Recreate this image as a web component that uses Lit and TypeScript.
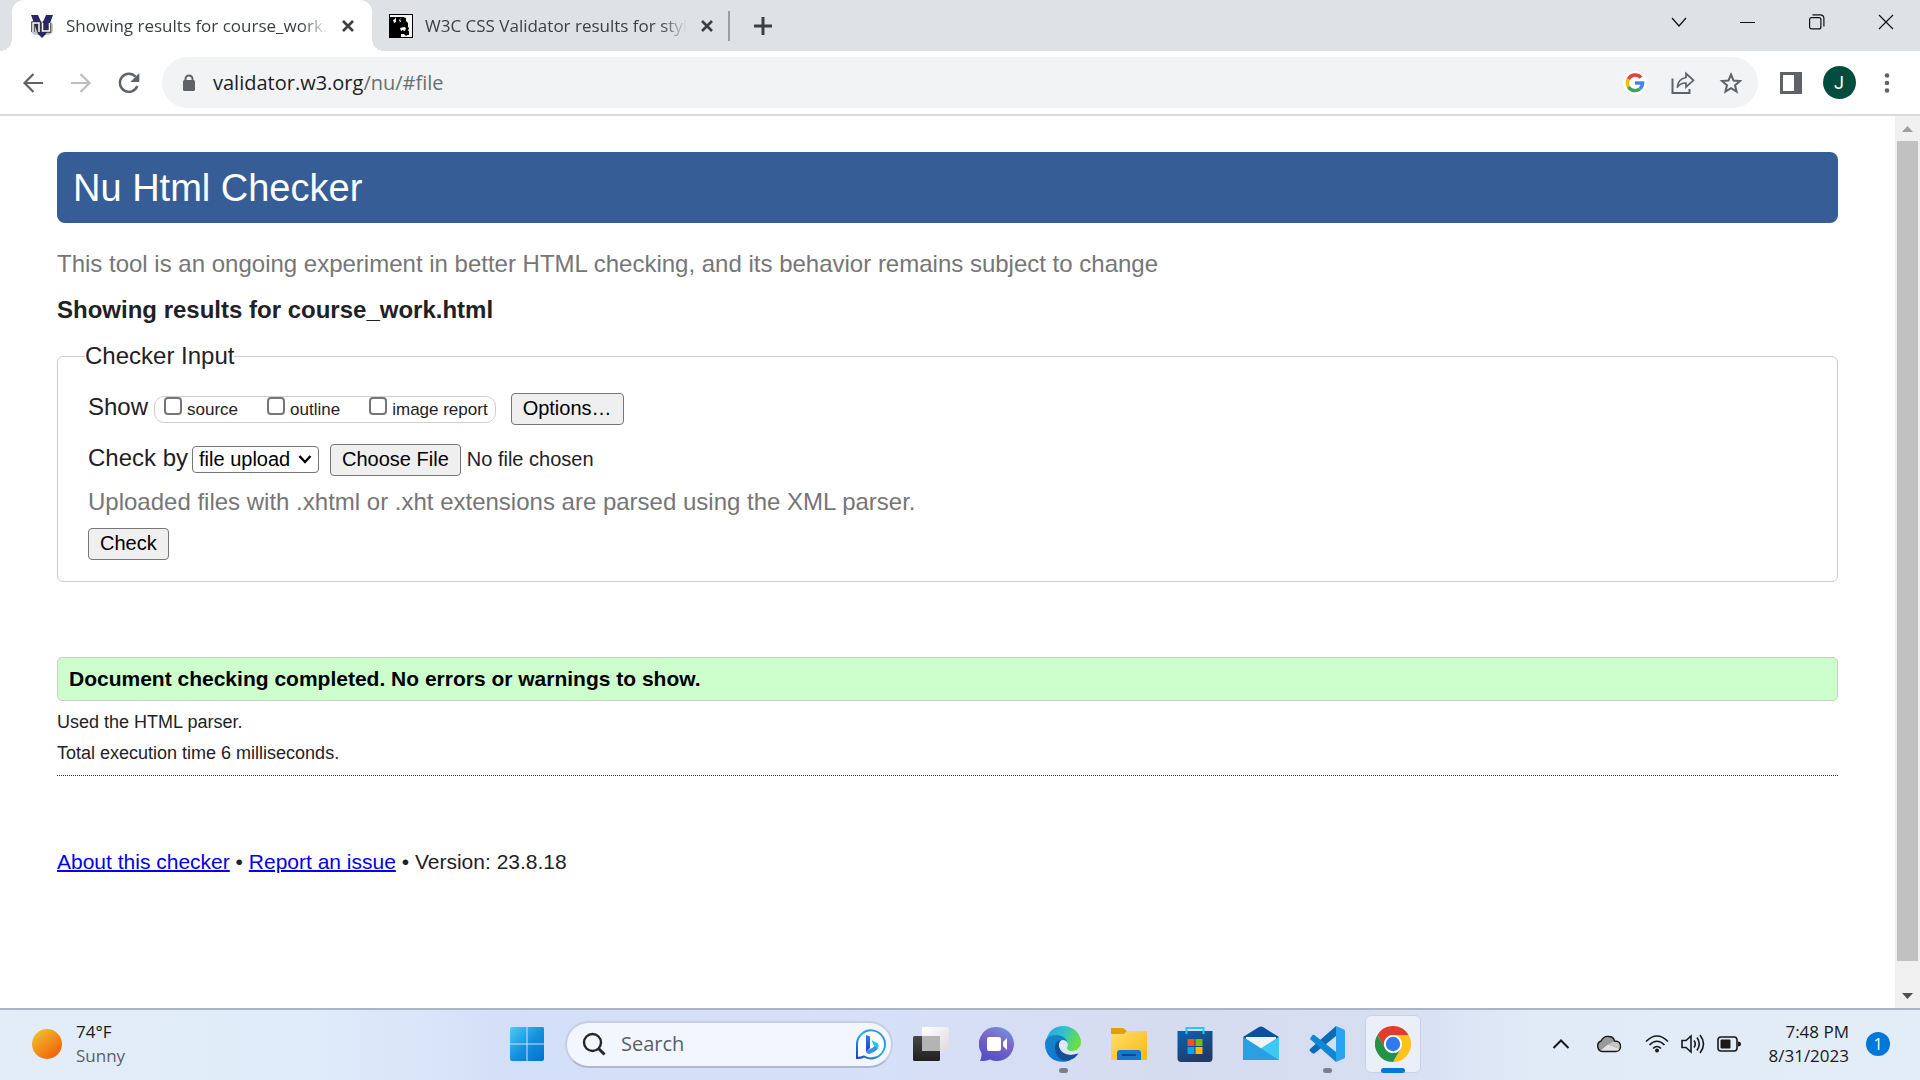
import { LitElement, html, svg, css } from "lit";
import { customElement } from "lit/decorators.js";

const stroke = (d: string, w = 2, color = "currentColor") =>
  svg`<path d=${d} fill="none" stroke=${color} stroke-width=${w}></path>`;

const icon = (size: number, body: unknown) =>
  html`<svg width=${size} height=${size} viewBox="0 0 ${size} ${size}" aria-hidden="true">${body}</svg>`;

@customElement("browser-chrome")
class BrowserChrome extends LitElement {
  static styles = css`
    :host { display: block; font-family: "Open Sans", "Noto Sans", sans-serif; color: #3c4043; }
    button { border: 0; padding: 0; margin: 0; background: none; color: inherit; font: inherit;
      display: flex; align-items: center; justify-content: center; flex: none; }
    svg { display: block; flex: none; }
    .strip { display: flex; height: 51px; background: #dee1e6; padding-left: 12px; }
    .tab { position: relative; display: flex; align-items: center; width: 359px; height: 51px;
      box-sizing: border-box; padding: 0 12px 0 18px; border-radius: 12px 12px 0 0; }
    .tab.active { background: #fff; width: 360px; }
    .tab:not(.active) { padding-left: 17px; }
    .tab.active::before, .tab.active::after { content: ""; position: absolute; bottom: 0; width: 12px; height: 12px; }
    .tab.active::before { left: -12px; background: radial-gradient(circle at 0 0, transparent 12px, #fff 12px); }
    .tab.active::after { right: -12px; background: radial-gradient(circle at 100% 0, transparent 12px, #fff 12px); }
    .tab-title { flex: 1; margin: 0 8px 0 12px; overflow: hidden; white-space: nowrap; font-size: 17px; line-height: 24px;
      -webkit-mask-image: linear-gradient(90deg, #000 90%, transparent); mask-image: linear-gradient(90deg, #000 90%, transparent); }
    .tab-close { width: 24px; height: 24px; }
    .divider { width: 2px; height: 30px; margin: 11px 12px 0 -3px; background: #9a9da1; }
    .new-tab { width: 42px; height: 51px; padding-bottom: 0; }
    .window-controls { display: flex; margin-left: auto; color: #111; }
    .window-controls button { width: 69px; height: 44px; }
    .toolbar { display: flex; align-items: center; height: 63px; box-sizing: border-box; padding: 0 9px; background: #fff;
      color: #5f6368; }
    .tool { width: 48px; height: 48px; }
    .tool.dim { color: #bcbec1; }
    .address { display: flex; align-items: center; flex: 1; height: 51px; margin: 0 9px; padding: 0 3px 0 18px;
      border-radius: 26px; background: #f1f3f4; }
    .url { flex: 1; margin-left: 15px; font-size: 20px; line-height: 28px; color: #6a6e73; white-space: nowrap; }
    .host { color: #202124; }
    .avatar { display: flex; align-items: center; justify-content: center; width: 33px; height: 33px; border-radius: 50%;
      background: #004d40; color: #fff; font: 18px/24px Roboto, sans-serif; }
    .rule { height: 2px; background: #dadada; }
  `;

  private closeIcon = icon(14, stroke("M2 2 L12 12 M12 2 L2 12", 2.6, "#3c4043"));

  render() {
    return html`
      <div class="strip">
        <div class="tab active">
          ${icon(24, svg`
            <rect x="1" y="7" width="22" height="14" rx="5" fill="#c4c4c4"></rect>
            <path d="M1 1h7l4 9 4-9h7l-7 19-4 4-4-4z" fill="#29266b"></path>
            <path d="M3 18V9h6v9M12.500 9v8h7V9" fill="none" stroke="#333" stroke-width="3.400"></path>
            <path d="M3 18V9h6v9M12.500 9v8h7V9" fill="none" stroke="#fff" stroke-width="1.500"></path>`)}
          <span class="tab-title">Showing results for course_work.html</span>
          <button class="tab-close" aria-label="Close tab">${this.closeIcon}</button>
        </div>
        <div class="tab">
          ${icon(24, svg`
            <rect width="24" height="24" fill="#000"></rect>
            <path d="M1 1H23V23H12V20H15L17 22L20 20V17L16 18L12 17L11 14L15 13L16 10L14 8H11L10 6L12 4H15V3H6L7 5V8L5 9L4 6L6 5V3H1z" fill="#f6f4ee"></path>
            <path d="M11 5L14 3L17 4V7L19 9V13L20 14L19 17L20 21H16L15 19L12 18L13 16L16 17L17 14L14 12L15 9L12 8z" fill="#000"></path>`)}
          <span class="tab-title">W3C CSS Validator results for style.css</span>
          <button class="tab-close" aria-label="Close tab">${this.closeIcon}</button>
        </div>
        <div class="divider"></div>
        <button class="new-tab" aria-label="New tab">${icon(20, stroke("M10 1V19M1 10H19", 3, "#3c4043"))}</button>
        <div class="window-controls">
          <button aria-label="Search tabs">${icon(16, stroke("M1 4L8 12L15 4", 1.2))}</button>
          <button aria-label="Minimize">${icon(16, stroke("M0 8.5H15", 1))}</button>
          <button aria-label="Restore">${icon(16, svg`
            <rect x=".6" y="3.6" width="11.3" height="11.3" rx="2" fill="none" stroke="currentColor" stroke-width="1.2"></rect>
            ${stroke("M3.5 .8H11Q14.9 .8 14.9 4.5V12.5", 1.2)}`)}</button>
          <button aria-label="Close">${icon(16, stroke("M1 1L15 15M15 1L1 15", 1.2))}</button>
        </div>
      </div>
      <div class="toolbar">
        <button class="tool" aria-label="Back">${icon(24, stroke("M22 12H4M12.5 3L3.5 12L12.5 21", 2.2))}</button>
        <button class="tool dim" aria-label="Forward">${icon(24, stroke("M2 12H20M11.5 3L20.5 12L11.5 21", 2.2))}</button>
        <button class="tool" aria-label="Reload">${icon(24, svg`
          ${stroke("M20.3 15A9 9 0 1 1 18.6 5.8", 2.4)}
          <path d="M22.3 2V11H13.3z" fill="currentColor"></path>`)}</button>
        <div class="address">
          ${icon(18, svg`
            <rect x="3" y="6" width="12" height="11" rx="1.5" fill="#5f6368"></rect>
            ${stroke("M5.5 7V5a3.5 3.5 0 0 1 7 0V7", 2, "#5f6368")}`)}
          <span class="url"><span class="host">validator.w3.org</span>/nu/#file</span>
          <button class="tool" aria-label="Google">${icon(24, svg`
            <circle cx="12" cy="12" r="12" fill="#fff"></circle>
            <g fill="none" stroke-width="3.4">
              <path d="M18 6.6A7.6 7.6 0 0 0 5.4 8.2" stroke="#ea4335"></path>
              <path d="M5.4 8.2A7.6 7.6 0 0 0 5.4 15.8" stroke="#fbbc05"></path>
              <path d="M5.4 15.8A7.6 7.6 0 0 0 17 17.7" stroke="#34a853"></path>
              <path d="M17 17.7A7.6 7.6 0 0 0 19.6 12H12" stroke="#4285f4"></path>
            </g>`)}</button>
          <button class="tool" aria-label="Share">${icon(24, svg`
            ${stroke("M1.5 7.5V22H18.5V18", 2)}
            <path d="M15 2.5L22.5 9.3L15 16V12C10 12 8 13.500 6.200 16.500C6.800 11 9.500 7.300 15 6.500z" fill="none" stroke="currentColor" stroke-width="1.7"></path>`)}</button>
          <button class="tool" aria-label="Bookmark">${icon(24, svg`
            <path d="M12 3.500L14.500 9.500L21 10L16 14.300L17.600 20.700L12 17.200L6.400 20.700L8 14.300L3 10L9.500 9.500z" fill="none" stroke="currentColor" stroke-width="2"></path>`)}</button>
        </div>
        <button class="tool" aria-label="Side panel">${icon(22, svg`
          <rect width="22" height="22" fill="currentColor"></rect><rect x="3" y="3" width="11" height="16" fill="#fff"></rect>`)}</button>
        <button class="tool" aria-label="Profile"><span class="avatar">J</span></button>
        <button class="tool" aria-label="Menu">${icon(22, svg`
          <circle cx="11" cy="3.500" r="2.300" fill="currentColor"></circle>
          <circle cx="11" cy="11" r="2.300" fill="currentColor"></circle>
          <circle cx="11" cy="18.500" r="2.300" fill="currentColor"></circle>`)}</button>
      </div>
      <div class="rule"></div>
    `;
  }
}

@customElement("checker-page")
class CheckerPage extends LitElement {
  static styles = css`
    :host { display: flex; flex: 1; background: #fff; color: #1f2126; font-family: "Liberation Sans", Arial, sans-serif; }
    .content { flex: 1; min-width: 0; padding: 36px 57px 0; font-size: 24px; line-height: 28px; }
    h1 { margin: 0 0 27px; padding: 14px 16px 13px; border-radius: 8px; background: #365d95; color: #fff;
      font-size: 38px; font-weight: 400; line-height: 44px; }
    p, h2 { margin: 0 0 18px; }
    h2 { font-size: 24px; line-height: 28px; }
    .muted { color: #767676; }
    fieldset { margin: 0 0 75px; padding: 23px 30px 21px; border: 1px solid #ccc; border-radius: 6px; min-width: 0; }
    legend { margin-left: -3px; padding: 0; }
    .row { display: flex; align-items: baseline; height: 32px; margin-bottom: 19px; }
    .row.by { margin-bottom: 12px; }
    .row label { white-space: nowrap; }
    .hint { margin-bottom: 12px; }
    .group { display: flex; gap: 29px; align-items: baseline; margin: 0 15px 0 6px; padding: 0 7px 0 9px; border: 1px solid #d0d0d0;
      border-radius: 10px; font-size: 17px; line-height: 25px; }
    .group label { display: flex; align-items: baseline; gap: 5px; }
    .group input { appearance: none; width: 18px; height: 18px; margin: 0; border: 2px solid #767676; border-radius: 4px;
      background: #fff; align-self: flex-start; }
    button, ::file-selector-button { box-sizing: border-box; height: 32px; padding: 0 11px 2px; border: 1px solid #767676;
      border-radius: 4px; background: #efefef; color: #000; font: 20px/28px "Liberation Sans", Arial, sans-serif; }
    .picker { display: flex; align-items: baseline; margin: 0 11px 0 4px; border: 1px solid #767676; border-radius: 4px;
      padding: 0 6px; height: 25px; }
    select { appearance: none; border: 0; padding: 0; margin: 0 7px 0 0; background: none; color: #000;
      font: 20px/25px "Liberation Sans", Arial, sans-serif; }
    .file { font: 20px/30px "Liberation Sans", Arial, sans-serif; color: #1f2126; }
    ::file-selector-button { margin: 0 6px 0 0; }
    .success { margin: 0 0 9px; padding: 8px 11px; border: 1px solid #ccc; border-radius: 5px; background: #cfc; color: #000;
      font-size: 21px; font-weight: 700; line-height: 26px; }
    .detail { margin: 0 0 7px; font-size: 18px; line-height: 24px; }
    hr { margin: 10px 0 72px; border: 0; border-top: 1px dotted #333; }
    .about { font-size: 21px; }
    a { color: #00e; text-decoration-thickness: 2px; }
    .scrollbar { display: flex; flex-direction: column; align-items: center; justify-content: space-between; width: 25px; background: #f0f0f0; }
    .thumb { flex: 1; width: 21px; background: #c1c1c1; }
    .arrow { display: block; }
    .arrow.down { margin-top: 22px; }
  `;

  render() {
    return html`
      <main class="content">
        <h1>Nu Html Checker</h1>
        <p class="muted">This tool is an ongoing experiment in better HTML checking, and its behavior remains subject to change</p>
        <h2>Showing results for course_work.html</h2>
        <fieldset>
          <legend>Checker Input</legend>
          <div class="row">
            <span>Show</span>
            <div class="group">
              ${["source", "outline", "image report"].map((t) => html`<label><input type="checkbox" />${t}</label>`)}
            </div>
            <button>Options…</button>
          </div>
          <div class="row by">
            <label for="method">Check by</label>
            <span class="picker">
              <select id="method"><option>file upload</option></select>
              ${icon(14, stroke("M1.500 4L7 10L12.500 4", 2.300, "#000"))}
            </span>
            <input class="file" type="file" aria-label="File to check" />
          </div>
          <p class="muted hint">Uploaded files with .xhtml or .xht extensions are parsed using the XML parser.</p>
          <button>Check</button>
        </fieldset>
        <p class="success">Document checking completed. No errors or warnings to show.</p>
        <p class="detail">Used the HTML parser.</p>
        <p class="detail">Total execution time 6 milliseconds.</p>
        <hr />
        <p class="about"><a href="#about">About this checker</a> • <a href="#issue">Report an issue</a> • Version: 23.8.18</p>
      </main>
      <div class="scrollbar" aria-hidden="true">
        <svg class="arrow" width="25" height="25" viewBox="0 0 25 25"><path d="M7 16L12.500 10L18 16z" fill="#a0a0a0"></path></svg>
        <div class="thumb"></div>
        <svg class="arrow down" width="25" height="25" viewBox="0 0 25 25"><path d="M7 10L12.500 16L18 10z" fill="#505050"></path></svg>
      </div>
    `;
  }
}

@customElement("task-bar")
class TaskBar extends LitElement {
  static styles = css`
    :host { display: grid; grid-template-columns: 1fr auto 1fr; align-items: center; height: 68px; padding-bottom: 2px;
      border-top: 2px solid #abb5c4;
      font-family: "Open Sans", "Noto Sans", sans-serif; font-size: 17px; line-height: 24px; color: #191919;
      background: linear-gradient(90deg, #e2edf8 0%, #e0ecf9 16%, #d3dff8 27%, #d6e0f8 46%, #d6dcf0 60%, #d6def2 72%, #e0ebf7 80%, #e2edf8 100%); }
    button { border: 0; padding: 0; margin: 0; background: none; color: inherit; font: inherit; }
    svg { display: block; flex: none; }
    .weather { display: flex; align-items: center; gap: 14px; margin-left: 32px; text-align: left; justify-self: start; }
    .condition { color: #5b5f66; }
    .sun { width: 30px; height: 30px; border-radius: 50%; background: linear-gradient(140deg, #efc02f 10%, #f26a0c 80%); }
    .apps { display: flex; align-items: center; }
    .app { position: relative; display: flex; align-items: center; justify-content: center; width: 56px; height: 58px; margin: 0 5px;
      box-sizing: border-box; border-radius: 6px; }
    .app.current { background: #ebeff9; border: 1px solid #c9d1e6; }
    .running { position: absolute; bottom: 0; width: 9px; height: 5px; border-radius: 3px; background: #7b7f89; }
    .current .running { width: 24px; background: #0078d7; bottom: -1px; }
    .search { display: flex; align-items: center; width: 328px; height: 47px; margin: 0 5px; box-sizing: border-box;
      padding: 0 4px 0 15px; border: 2px solid #c5cee2; border-bottom-color: #adb8cd; border-radius: 24px; background: #f2f6fe; }
    .search input { flex: 1; min-width: 0; border: 0; padding: 0; margin: 0 0 0 15px; background: none; outline: 0;
      font: 20px/28px "Open Sans", "Noto Sans", sans-serif; }
    .search input::placeholder { color: #5c5e63; opacity: 1; }
    .tray { display: flex; align-items: center; justify-self: end; margin-right: 30px; }
    .tray button { display: flex; align-items: center; justify-content: center; }
    .slot { width: 48px; height: 48px; }
    .status { display: flex; gap: 12px; margin: 0 27px 0 12px; }
    .clock { text-align: right; }
    .badge { width: 24px; height: 24px; margin-left: 17px; border-radius: 50%; background: #0078d7; color: #fff; font-size: 16px; }
  `;

  private apps = [
    { name: "Task view", art: svg`
        <defs><linearGradient id="tv" x2="0" y2="1"><stop stop-color="#484848"></stop><stop offset="1" stop-color="#202020"></stop></linearGradient>
        <linearGradient id="tw" x2="1" y2="1"><stop stop-color="#fff"></stop><stop offset="1" stop-color="#dcdcdc"></stop></linearGradient></defs>
        <rect x="0" y="10" width="27" height="25" rx="1.500" fill="url(#tv)"></rect>
        <rect x="9" y="1" width="27" height="24" rx="1.500" fill="url(#tw)"></rect>
        <path d="M9 10H27V25H10Q9 25 9 24z" fill="#b4b4b4"></path>` },
    { name: "Chat", art: svg`
        <defs><linearGradient id="ch" x1=".9" y1="0" x2=".4" y2="1"><stop stop-color="#6d9be8"></stop><stop offset=".45" stop-color="#7b68c4"></stop><stop offset="1" stop-color="#5350c8"></stop></linearGradient></defs>
        <path d="M18 1A17 17 0 1 1 11 33.500Q6 35.500 1 35Q3 31 2.500 27A17 17 0 0 1 18 1z" fill="url(#ch)"></path>
        <rect x="8" y="11" width="14" height="14" rx="2" fill="#fff"></rect>
        <path d="M24 16L28 12V24L24 20z" fill="#fff"></path>` },
    { name: "Edge", running: true, art: svg`
        <defs><linearGradient id="ea" x2="1" y2=".4"><stop stop-color="#2a9fe0"></stop><stop offset=".5" stop-color="#2fc2cf"></stop><stop offset="1" stop-color="#6ade45"></stop></linearGradient>
        <linearGradient id="eb" x2=".6" y2="1"><stop stop-color="#1a87c9"></stop><stop offset="1" stop-color="#0778d4"></stop></linearGradient></defs>
        <path d="M1 15C3 5 10 0 18 0C29 0 36 8 36 16C36 22 31 25 27 25C23 25 21 23 22.500 20.500C23 19 23 17 21 15z" fill="url(#ea)"></path>
        <path d="M0 18C0 12 5 9 11 9C18 9 22 13 22.500 17C20 13 15 14 14 19C13 25 17 33 25 34C16 39 0 34 0 18z" fill="url(#eb)"></path>
        <path d="M14 19C14 16 15.500 14.500 17 14C12 14 9.500 18 10 23C11 31 17 36 24 34.500C29 33 32.500 29.500 33.500 27C27 30 15 30 14 19z" fill="#12509c"></path>
        <path d="M22.500 17C23 20 21 21 22 23C24 26.500 29 26.500 33.500 25.500V27C27 30 16 28.500 14 20C13.500 13 20 12 22.500 17z" fill="#dfe7f5"></path>` },
    { name: "File Explorer", art: svg`
        <defs><linearGradient id="fe" x2="1" y2="1"><stop stop-color="#ffdf70"></stop><stop offset="1" stop-color="#fbb70f"></stop></linearGradient></defs>
        <path d="M0 2H12L16 5H36V9H0z" fill="#e0a106"></path>
        <path d="M0 8H13L16 5H36V34H0z" fill="url(#fe)"></path>
        <path d="M6 34V27Q6 24 9 24H27Q30 24 30 27V34z" fill="#1478cc"></path>
        <path d="M11 29H25" stroke="#074c90" stroke-width="2"></path>` },
    { name: "Microsoft Store", art: svg`
        <defs><linearGradient id="ms" x2=".5" y2="1"><stop stop-color="#0864b4"></stop><stop offset="1" stop-color="#233a66"></stop></linearGradient></defs>
        <path d="M0.500 5H35.500V32Q35.500 36 32 36H4Q0.500 36 0.500 32z" fill="url(#ms)"></path>
        <path d="M9.500 8V2H26.500V8" fill="none" stroke="#2cc4f0" stroke-width="2"></path>
        <path d="M10.500 13H17.500V20H10.500z" fill="#f25022"></path><path d="M18.500 13H25.500V20H18.500z" fill="#7fba00"></path>
        <path d="M10.500 21H17.500V28H10.500z" fill="#00a4ef"></path><path d="M18.500 21H25.500V28H18.500z" fill="#ffb900"></path>` },
    { name: "Mail", art: svg`
        <path d="M0 11L16 1Q18 0 20 1L36 11V18H0z" fill="#0c4f9e"></path>
        <path d="M3 11H33V20L18 26L3 20z" fill="#f3f3f3"></path>
        <path d="M0 11L18 22.500L36 11V34H0z" fill="#28b1ec"></path>
        <path d="M0 11L36 34H0z" fill="#2a9fe2"></path>
        <path d="M18 22.500L36 11V34z" fill="#3ccaf4"></path>` },
    { name: "Visual Studio Code", running: true, art: svg`
        <path d="M1 23L27 0V10L6 27Q4.500 28 3 27L1 25Q0 24 1 23z" fill="#0b6cb5"></path>
        <path d="M1 13L3 9.500Q4.500 8 6 9.500L27 26V36L1 13z" fill="#0f87d4"></path>
        <path d="M27 0L35 3.500Q36 4 36 5V31Q36 32 35 32.500L27 36z" fill="#29a3f2"></path>` },
    { name: "Chrome", running: true, current: true, art: svg`
        <path d="M2.400 9A18 18 0 0 1 33.600 9L18 9A9 9 0 0 0 10.200 22.500z" fill="#e33b2e"></path>
        <path d="M33.600 9A18 18 0 0 1 18 36L25.800 22.500A9 9 0 0 0 18 9z" fill="#fcc31e"></path>
        <path d="M18 36A18 18 0 0 1 2.400 9L10.200 22.500A9 9 0 0 0 25.800 22.500z" fill="#249245"></path>
        <circle cx="18" cy="18" r="9" fill="#fff"></circle><circle cx="18" cy="18" r="7.200" fill="#2f7bee"></circle>` },
  ];

  render() {
    return html`
      <button class="weather"><span class="sun"></span><span>74°F<br /><span class="condition">Sunny</span></span></button>
      <div class="apps">
        <button class="app" aria-label="Start">${icon(36, svg`
          <defs><linearGradient id="st" gradientUnits="userSpaceOnUse" x1="0" y1="0" x2="34" y2="34"><stop stop-color="#4cd0fb"></stop><stop offset=".55" stop-color="#168fdc"></stop><stop offset="1" stop-color="#0074d1"></stop></linearGradient></defs>
          <path d="M3 1H17.500V17.500H1V3Q1 1 3 1zM18.500 1H34Q35 1 35 3V17.500H18.500zM1 18.500H17.500V35H3Q1 35 1 33zM18.500 18.500H35V33Q35 35 33 35H18.500z" fill="url(#st)"></path>`)}</button>
        <label class="search">
          ${icon(24, svg`<circle cx="10.500" cy="10.500" r="8.500" fill="none" stroke="#262626" stroke-width="2.400"></circle>${stroke("M16.500 16.500L22.500 22.500", 3, "#262626")}`)}
          <input type="text" placeholder="Search" aria-label="Search" />
          ${icon(32, svg`
            <defs><linearGradient id="bg" x1="1" y1="0" x2="0" y2="1"><stop stop-color="#2f8be8"></stop><stop offset=".5" stop-color="#2aa9ec"></stop><stop offset="1" stop-color="#1747c0"></stop></linearGradient>
            <linearGradient id="bb" x2="0" y2="1"><stop stop-color="#2b7fe8"></stop><stop offset="1" stop-color="#1b3fd0"></stop></linearGradient></defs>
            <path d="M2 30V16A14 14 0 1 1 9 28.500Q6 30 2 30z" fill="#fff" stroke="url(#bg)" stroke-width="2"></path>
            <path d="M11 7L15 8.500V20L11 24z" fill="url(#bb)"></path>
            <path d="M11 23L17 20L21 17L23 20Q22 23 14.500 26Q11 26 11 23z" fill="#3f8ff0"></path>
            <path d="M16.500 12L23 15.500Q24.500 18 23 21L18.500 17z" fill="#22c8e8"></path>`)}
        </label>
        ${this.apps.map((a) => html`
          <button class="app ${a.current ? "current" : ""}" aria-label=${a.name}>
            ${icon(36, a.art)}${a.running ? html`<span class="running"></span>` : ""}
          </button>`)}
      </div>
      <div class="tray">
        <button class="slot" aria-label="Show hidden icons">${icon(18, stroke("M1.500 13L9 5.500L16.500 13", 2))}</button>
        <button class="slot" aria-label="OneDrive">${icon(26, svg`
          <path d="M6.500 20.500A5.500 5.500 0 0 1 5 10Q8 4.500 13 5.500Q17.500 5.500 18.500 10Q25 10 24.500 16Q24 20.500 19.500 20.500z" fill="#9a9a9a"></path>
          <path d="M4 20L12 13.500L24 18Q22 20.500 19.500 20.500H6.500z" fill="#e2e2e2"></path>
          <path d="M12 13.500L18.500 10Q25 10 24.500 16L24 18z" fill="#c4c4c4"></path>
          <path d="M6.500 20.500A5.500 5.500 0 0 1 5 10Q8 4.500 13 5.500Q17.500 5.500 18.500 10Q25 10 24.500 16Q24 20.500 19.500 20.500z" fill="none" stroke="#191919" stroke-width="1.400"></path>`)}</button>
        <button class="status" aria-label="Network, volume, battery">
          ${icon(24, svg`
            ${stroke("M1 9.500Q12 -1.500 23 9.500M4.500 13Q12 5.500 19.500 13M8 16.500Q12 12.500 16 16.500", 1.600)}
            <circle cx="12" cy="18.500" r="2" fill="currentColor"></circle>`)}
          ${icon(24, stroke("M1 8.500H5L10 4V20L5 15.500H1zM13 8.500Q15.500 12 13 15.500M16 5.500Q20.500 12 16 18.500M19 3Q26 12 19 21", 1.600))}
          ${icon(24, svg`
            <rect x="1" y="5" width="19" height="14" rx="3" fill="none" stroke="currentColor" stroke-width="1.600"></rect>
            <rect x="3.500" y="7.500" width="10" height="9" rx="1" fill="currentColor"></rect>
            <path d="M21 9.500Q24 9.500 24 12T21 14.500z" fill="currentColor"></path>`)}
        </button>
        <button class="clock"><span>7:48 PM<br />8/31/2023</span></button>
        <button class="badge" aria-label="1 notification">1</button>
      </div>
    `;
  }
}

@customElement("app-root")
class AppRoot extends LitElement {
  static styles = css`
    :host { display: flex; flex-direction: column; min-height: 100vh; background: #fff; }
  `;

  render() {
    return html`<browser-chrome></browser-chrome><checker-page></checker-page><task-bar></task-bar>`;
  }
}
